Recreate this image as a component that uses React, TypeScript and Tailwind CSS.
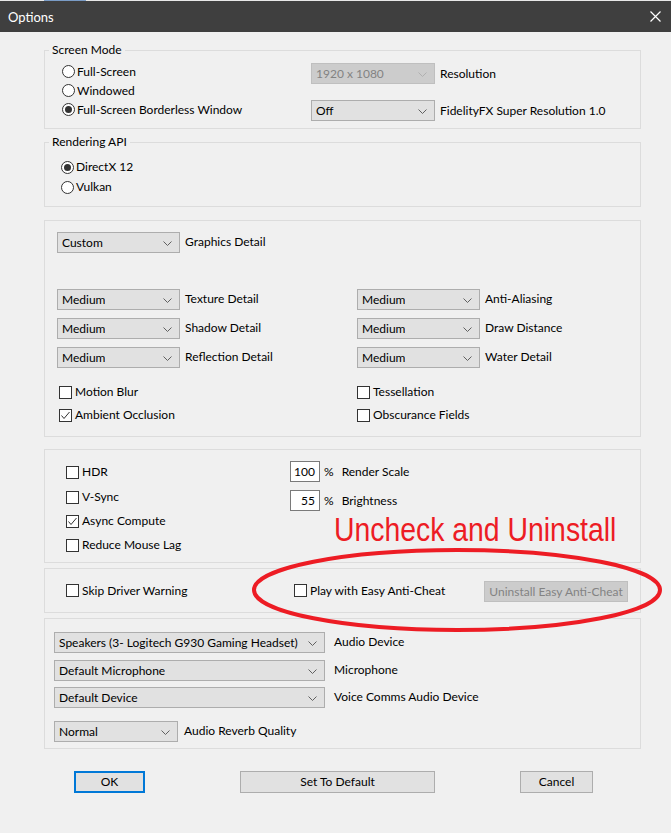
import React from "react";

type DropProps = { value: string; w: string; disabled?: boolean };

function Dropdown({ value, w, disabled }: DropProps) {
  return (
    <div
      className={`relative flex h-[21px] shrink-0 items-center border pl-[4px] ${w} ${
        disabled
          ? "border-[#bfbfbf] bg-[#cccccc] text-[#838383]"
          : "border-[#adadad] bg-[#e1e1e1] text-black"
      }`}
    >
      <span className="truncate">{value}</span>
      <svg
        className="absolute right-[7px] top-[8px]"
        width="9"
        height="5"
        viewBox="0 0 9 5"
      >
        <polyline
          points="0.5,0.5 4.5,4.5 8.5,0.5"
          fill="none"
          stroke={disabled ? "#b0b0b0" : "#606060"}
          strokeWidth="1"
        />
      </svg>
    </div>
  );
}

function Radio({ label, checked }: { label: string; checked?: boolean }) {
  return (
    <div className="flex h-full items-center gap-[2px] whitespace-nowrap">
      <span className="flex h-[13px] w-[13px] shrink-0 items-center justify-center rounded-full border border-[#333333] bg-white">
        {checked && <span className="h-[7px] w-[7px] rounded-full bg-[#333333]" />}
      </span>
      <span>{label}</span>
    </div>
  );
}

function Check({ label, checked }: { label: string; checked?: boolean }) {
  return (
    <div className="flex h-[16px] items-center gap-[3px] whitespace-nowrap">
      <span className="flex h-[13px] w-[13px] shrink-0 items-center justify-center border border-[#333333] bg-white">
        {checked && (
          <svg width="11" height="11" viewBox="0 0 11 11">
            <polyline
              points="1.5,5.5 4,8.5 9.5,2"
              fill="none"
              stroke="#333333"
              strokeWidth="1"
            />
          </svg>
        )}
      </span>
      <span>{label}</span>
    </div>
  );
}

function Labeled({ value, label, w = "w-[123px]", ml = "ml-[5px]" }: { value: string; label: string; w?: string; ml?: string }) {
  return (
    <div className="flex items-center whitespace-nowrap">
      <Dropdown value={value} w={w} />
      <span className={`${ml} -mt-[1px]`}>{label}</span>
    </div>
  );
}

function PctBox({ value, label }: { value: string; label: string }) {
  return (
    <div className="flex items-center whitespace-nowrap">
      <div className="flex h-[21px] w-[30px] items-center justify-end border border-[#7a7a7a] bg-white pr-[4px]">
        {value}
      </div>
      <span className="ml-[4px]">%</span>
      <span className="ml-[8px]">{label}</span>
    </div>
  );
}

export default function App() {
  return (
    <div className="relative h-[833px] w-[671px] overflow-hidden bg-[#f0f0f0] font-['Lato','Liberation_Sans',sans-serif] text-[12px] leading-[16px] text-black">
      <div className="flex h-[1px] bg-[#e8e8e8]">
        <div className="ml-[44px] w-[42px] bg-[#7a9cc6]" />
      </div>
      <div className="flex h-[31px] items-center justify-between bg-[#3f3f3f] pl-[8px] pr-[10px] text-[13px] text-white">
        <span>Options</span>
        <svg width="11" height="11" viewBox="0 0 11 11">
          <path d="M0.5 0.5 L10.5 10.5 M10.5 0.5 L0.5 10.5" stroke="#ffffff" strokeWidth="1.2" />
        </svg>
      </div>

      <div className="flex w-[641px] flex-col pl-[44px] pt-[10px]">
        {/* Screen Mode */}
        <fieldset className="border border-[#dcdcdc]">
          <legend className="ml-[4px] px-[3px]">Screen Mode</legend>
          <div className="flex h-[70px]">
            <div className="flex w-[266px] shrink-0 flex-col pl-[17px] pt-[4px]">
              <div className="h-[19px]"><Radio label="Full-Screen" /></div>
              <div className="h-[19px]"><Radio label="Windowed" /></div>
              <div className="h-[19px]"><Radio label="Full-Screen Borderless Window" checked /></div>
            </div>
            <div className="flex flex-col pt-[5px]">
              <div className="flex items-center whitespace-nowrap">
                <Dropdown value="1920 x 1080" w="w-[124px]" disabled />
                <span className="ml-[5px]">Resolution</span>
              </div>
              <div className="mt-[16px] flex items-center whitespace-nowrap">
                <Dropdown value="Off" w="w-[124px]" />
                <span className="ml-[5px]">FidelityFX Super Resolution 1.0</span>
              </div>
            </div>
          </div>
        </fieldset>

        {/* Rendering API */}
        <fieldset className="mt-[5px] border border-[#dcdcdc]">
          <legend className="ml-[4px] px-[3px]">Rendering API</legend>
          <div className="flex h-[56px] flex-col pl-[16px] pt-[7px]">
            <div className="h-[20px]"><Radio label="DirectX 12" checked /></div>
            <div className="h-[20px]"><Radio label="Vulkan" /></div>
          </div>
        </fieldset>

        {/* Graphics */}
        <div className="mt-[13px] flex flex-col border border-[#dcdcdc] pb-[13px] pl-[12px] pt-[11px]">
          <Labeled value="Custom" label="Graphics Detail" />
          <div className="mt-[36px] flex flex-col gap-[8px]">
            <div className="flex">
              <div className="w-[300px] shrink-0"><Labeled value="Medium" label="Texture Detail" /></div>
              <Labeled value="Medium" label="Anti-Aliasing" />
            </div>
            <div className="flex">
              <div className="w-[300px] shrink-0"><Labeled value="Medium" label="Shadow Detail" /></div>
              <Labeled value="Medium" label="Draw Distance" />
            </div>
            <div className="flex">
              <div className="w-[300px] shrink-0"><Labeled value="Medium" label="Reflection Detail" /></div>
              <Labeled value="Medium" label="Water Detail" />
            </div>
          </div>
          <div className="mt-[16px] flex">
            <div className="w-[300px] shrink-0 pl-[2px]"><Check label="Motion Blur" /></div>
            <Check label="Tessellation" />
          </div>
          <div className="mt-[7px] flex">
            <div className="w-[300px] shrink-0 pl-[2px]"><Check label="Ambient Occlusion" checked /></div>
            <Check label="Obscurance Fields" />
          </div>
        </div>

        {/* Display */}
        <div className="mt-[12px] flex h-[114px] border border-[#dcdcdc]">
          <div className="flex w-[245px] shrink-0 flex-col pl-[21px] pt-[14px]">
            <Check label="HDR" />
            <div className="mt-[9px]"><Check label="V-Sync" /></div>
            <div className="mt-[8px]"><Check label="Async Compute" checked /></div>
            <div className="mt-[8px]"><Check label="Reduce Mouse Lag" /></div>
          </div>
          <div className="flex flex-col gap-[8px] pt-[11px]">
            <PctBox value="100" label="Render Scale" />
            <PctBox value="55" label="Brightness" />
          </div>
        </div>

        {/* Anti-cheat */}
        <div className="mt-[5px] flex h-[45px] items-center border border-[#dcdcdc] pl-[21px]">
          <div className="w-[228px] shrink-0"><Check label="Skip Driver Warning" /></div>
          <div className="w-[190px] shrink-0"><Check label="Play with Easy Anti-Cheat" /></div>
          <div className="mt-[2px] flex h-[21px] w-[144px] shrink-0 items-center justify-center whitespace-nowrap border border-[#bfbfbf] bg-[#cccccc] text-[#838383]">
            Uninstall Easy Anti-Cheat
          </div>
        </div>

        {/* Audio */}
        <div className="mt-[5px] flex flex-col border border-[#dcdcdc] pb-[6px] pl-[9px] pt-[13px]">
          <Labeled value="Speakers (3- Logitech G930 Gaming Headset)" label="Audio Device" w="w-[271px]" ml="ml-[9px]" />
          <div className="mt-[7px]">
            <Labeled value="Default Microphone" label="Microphone" w="w-[271px]" ml="ml-[9px]" />
          </div>
          <div className="mt-[6px]">
            <Labeled value="Default Device" label="Voice Comms Audio Device" w="w-[271px]" ml="ml-[9px]" />
          </div>
          <div className="mt-[13px]">
            <Labeled value="Normal" label="Audio Reverb Quality" w="w-[124px]" ml="ml-[6px]" />
          </div>
        </div>
      </div>

      {/* Buttons */}
      <div className="mt-[22px] flex pl-[74px]">
        <div className="flex h-[22px] w-[71px] items-center justify-center border-2 border-[#0078d7] bg-[#e1e1e1]">OK</div>
        <div className="ml-[95px] flex h-[22px] w-[195px] items-center justify-center border border-[#adadad] bg-[#e1e1e1]">Set To Default</div>
        <div className="ml-[85px] flex h-[22px] w-[73px] items-center justify-center border border-[#adadad] bg-[#e1e1e1]">Cancel</div>
      </div>

      {/* annotation overlay */}
      <div className="pointer-events-none absolute left-[334px] top-[513px] origin-left scale-x-[0.86] whitespace-nowrap font-['Liberation_Sans',Arial,sans-serif] text-[33px] leading-[33px] text-[#ed1c24]">
        Uncheck and Uninstall
      </div>
      <svg className="pointer-events-none absolute left-[250px] top-[547px]" width="414" height="86" viewBox="0 0 414 86">
        <ellipse cx="207" cy="43" rx="203" ry="40" fill="none" stroke="#ed1c24" strokeWidth="4" />
      </svg>
    </div>
  );
}
